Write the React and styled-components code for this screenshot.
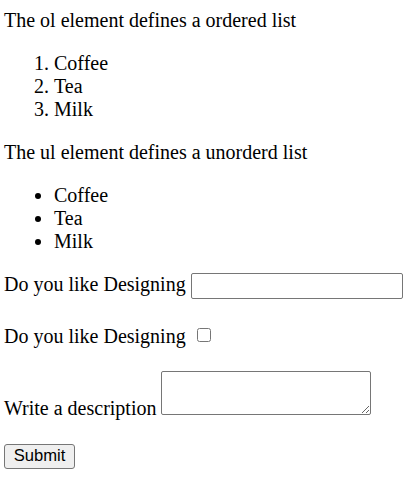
import React from 'react'
import styled, { createGlobalStyle } from 'styled-components'

const GlobalStyle = createGlobalStyle`
    body {
        margin: 0;
        background: #fff;
        color: #000;
        font-family: "Liberation Serif", "Times New Roman", serif;
        font-size: 20px;
        line-height: 23px;
    }
`

const Page = styled.div`
    padding: 9px 4px 0;
`

const Text = styled.p`
    margin: 0 0 20px;
`

const OrderedList = styled.ol`
    margin: 0 0 20px;
    padding-left: 50px;
`

const BulletList = styled.ul`
    margin: 0 0 20px;
    padding-left: 50px;
`

const Row = styled.div`
    margin-bottom: ${props => props.gap || 0}px;
`

const TextInput = styled.input`
    box-sizing: border-box;
    width: 212px;
    height: 26px;
    margin: 0;
    padding: 1px 3px;
    border: 1px solid #767676;
    border-radius: 2px;
    font-size: 16px;
    vertical-align: 0;
`

const CheckBox = styled.input`
    width: 14px;
    height: 14px;
    margin: 0 0 0 6px;
    vertical-align: 1px;
`

const TextArea = styled.textarea`
    box-sizing: border-box;
    width: 210px;
    height: 44px;
    margin: 0;
    border: 1px solid #767676;
    border-radius: 2px;
    font-size: 16px;
`

const SubmitButton = styled.button`
    box-sizing: border-box;
    width: 71px;
    height: 25px;
    padding: 0;
    background: #efefef;
    border: 1px solid #767676;
    border-radius: 3px;
    color: #000;
    font-family: "Liberation Sans", Arial, sans-serif;
    font-size: 16.6px;
`

export default function App() {
    return (
        <>
            <GlobalStyle />
            <Page>
                <Text>The ol element defines a ordered list</Text>
                <OrderedList>
                    <li>Coffee</li>
                    <li>Tea</li>
                    <li>Milk</li>
                </OrderedList>
                <Text>The ul element defines a unorderd list</Text>
                <BulletList>
                    <li>Coffee</li>
                    <li>Tea</li>
                    <li>Milk</li>
                </BulletList>
                <form onSubmit={e => e.preventDefault()}>
                    <Row gap={26}>
                        Do you like Designing <TextInput type="text" />
                    </Row>
                    <Row gap={23}>
                        Do you like Designing <CheckBox type="checkbox" />
                    </Row>
                    <Row gap={23}>
                        Write a description <TextArea />
                    </Row>
                    <SubmitButton type="submit">Submit</SubmitButton>
                </form>
            </Page>
        </>
    )
}
